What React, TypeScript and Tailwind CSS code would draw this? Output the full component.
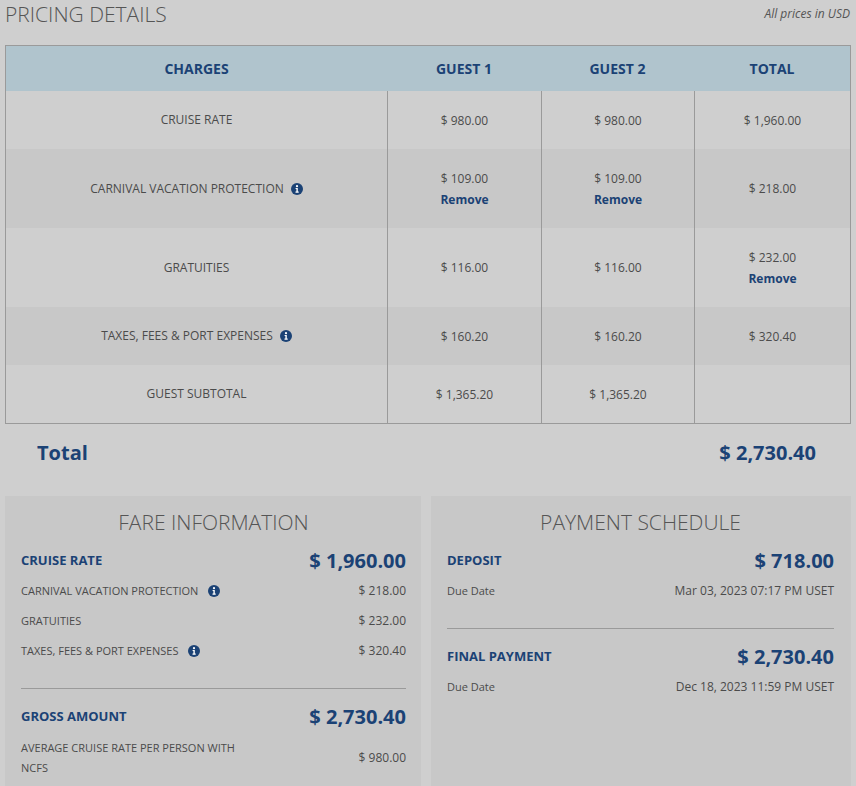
import React from "react";

const blue = "text-[#1b4275]";

function InfoIcon() {
  return (
    <svg width="12" height="12" viewBox="0 0 12 12" className="inline-block shrink-0">
      <circle cx="6" cy="6" r="6" fill="#1b4275" />
      <circle cx="6" cy="3.2" r="1.1" fill="#fff" />
      <path d="M4.6 5h2.2v3.6h0.9v1.1H4.5V8.6h0.9V6.1h-0.8z" fill="#fff" />
    </svg>
  );
}

type Row = {
  label: string;
  info?: boolean;
  g1: string;
  g2: string;
  total: string;
  remove1?: boolean;
  remove2?: boolean;
  removeT?: boolean;
  tall?: boolean;
  alt?: boolean;
};

const rows: Row[] = [
  { label: "CRUISE RATE", g1: "$ 980.00", g2: "$ 980.00", total: "$ 1,960.00" },
  {
    label: "CARNIVAL VACATION PROTECTION",
    info: true,
    g1: "$ 109.00",
    g2: "$ 109.00",
    total: "$ 218.00",
    remove1: true,
    remove2: true,
    tall: true,
    alt: true,
  },
  { label: "GRATUITIES", g1: "$ 116.00", g2: "$ 116.00", total: "$ 232.00", removeT: true, tall: true },
  { label: "TAXES, FEES & PORT EXPENSES", info: true, g1: "$ 160.20", g2: "$ 160.20", total: "$ 320.40", alt: true },
  { label: "GUEST SUBTOTAL", g1: "$ 1,365.20", g2: "$ 1,365.20", total: "" },
];

function Cell({ value, remove, border }: { value: string; remove?: boolean; border?: boolean }) {
  return (
    <div
      className={`flex flex-col items-center justify-center text-[12px] leading-[21px] ${
        border ? "border-l border-[#9a9a9a]" : ""
      }`}
    >
      {value && <span>{value}</span>}
      {remove && <span className={`font-bold ${blue}`}>Remove</span>}
    </div>
  );
}

function PanelRow({ label, value, info }: { label: string; value: string; info?: boolean }) {
  return (
    <div className="flex h-[30px] items-center justify-between">
      <span className="flex items-center gap-[10px] text-[11px]">
        {label}
        {info && <InfoIcon />}
      </span>
      <span className="text-[12px]">{value}</span>
    </div>
  );
}

function HeadRow({ label, value }: { label: string; value: string }) {
  return (
    <div className={`flex h-[30px] items-center justify-between ${blue}`}>
      <span className="text-[13px] font-bold">{label}</span>
      <span className="text-[20px] font-bold">{value}</span>
    </div>
  );
}

export default function App() {
  return (
    <div
      className="h-[786px] w-[856px] overflow-hidden bg-[#cfcfcf] text-[#4b4b4b]"
      style={{ fontFamily: '"Open Sans", "Liberation Sans", sans-serif' }}
    >
      {/* 헤더 */}
      <div className="flex h-[45px] items-start justify-between pl-[5px] pr-[6px]">
        <h1 className="text-[21px] font-light leading-[28px] text-[#555]">PRICING DETAILS</h1>
        <span className="pt-[5px] text-[12px] italic text-[#555]">All prices in USD</span>
      </div>

      {/* 요금 표 */}
      <div className="mx-[5px] border border-[#9a9a9a]">
        <div className={`grid h-[45px] grid-cols-[381px_154px_153px_1fr] items-center bg-[#b0c4cd] text-[14px] font-bold ${blue}`}>
          <span className="text-center">CHARGES</span>
          <span className="text-center">GUEST 1</span>
          <span className="text-center">GUEST 2</span>
          <span className="text-center">TOTAL</span>
        </div>
        {rows.map((r, i) => (
          <div
            key={i}
            className={`grid grid-cols-[381px_154px_153px_1fr] ${r.tall ? "h-[79px]" : "h-[58px]"} ${
              r.alt ? "bg-[#c8c8c8]" : ""
            }`}
          >
            <div className="flex items-center justify-center gap-[7px] text-[12px]">
              {r.label}
              {r.info && <InfoIcon />}
            </div>
            <Cell value={r.g1} remove={r.remove1} border />
            <Cell value={r.g2} remove={r.remove2} border />
            <Cell value={r.total} remove={r.removeT} border />
          </div>
        ))}
      </div>

      {/* 합계 */}
      <div className={`flex h-[57px] items-center justify-between pl-[37px] pr-[40px] text-[20px] font-bold ${blue}`}>
        <span>Total</span>
        <span>$ 2,730.40</span>
      </div>

      {/* 하단 패널 */}
      <div className="mt-[15px] flex gap-[10px] px-[5px]">
        <section className="h-[300px] w-[416px] bg-[#c8c8c8] pl-[16px] pr-[15px] pt-[12px]">
          <h2 className="text-center text-[21px] font-light leading-[28px] text-[#555]">FARE INFORMATION</h2>
          <div className="mt-[10px] border-b border-[#9a9a9a] pb-[22px]">
            <HeadRow label="CRUISE RATE" value="$ 1,960.00" />
            <PanelRow label="CARNIVAL VACATION PROTECTION" value="$ 218.00" info />
            <PanelRow label="GRATUITIES" value="$ 232.00" />
            <PanelRow label="TAXES, FEES & PORT EXPENSES" value="$ 320.40" info />
          </div>
          <div className="pt-[13px]">
            <HeadRow label="GROSS AMOUNT" value="$ 2,730.40" />
            <div className="mt-[6px] flex items-center justify-between">
              <span className="w-[225px] text-[11px] leading-[20px]">AVERAGE CRUISE RATE PER PERSON WITH NCFS</span>
              <span className="text-[12px]">$ 980.00</span>
            </div>
          </div>
        </section>
        <section className="h-[300px] flex-1 bg-[#c8c8c8] pl-[16px] pr-[17px] pt-[12px]">
          <h2 className="text-center text-[21px] font-light leading-[28px] text-[#555]">PAYMENT SCHEDULE</h2>
          <div className="mt-[10px] border-b border-[#9a9a9a] pb-[22px]">
            <HeadRow label="DEPOSIT" value="$ 718.00" />
            <div className="flex h-[30px] items-center justify-between">
              <span className="text-[11px]">Due Date</span>
              <span className="text-[12px]">Mar 03, 2023 07:17 PM USET</span>
            </div>
          </div>
          <div className="pt-[13px]">
            <HeadRow label="FINAL PAYMENT" value="$ 2,730.40" />
            <div className="flex h-[30px] items-center justify-between">
              <span className="text-[11px]">Due Date</span>
              <span className="text-[12px]">Dec 18, 2023 11:59 PM USET</span>
            </div>
          </div>
        </section>
      </div>
    </div>
  );
}
